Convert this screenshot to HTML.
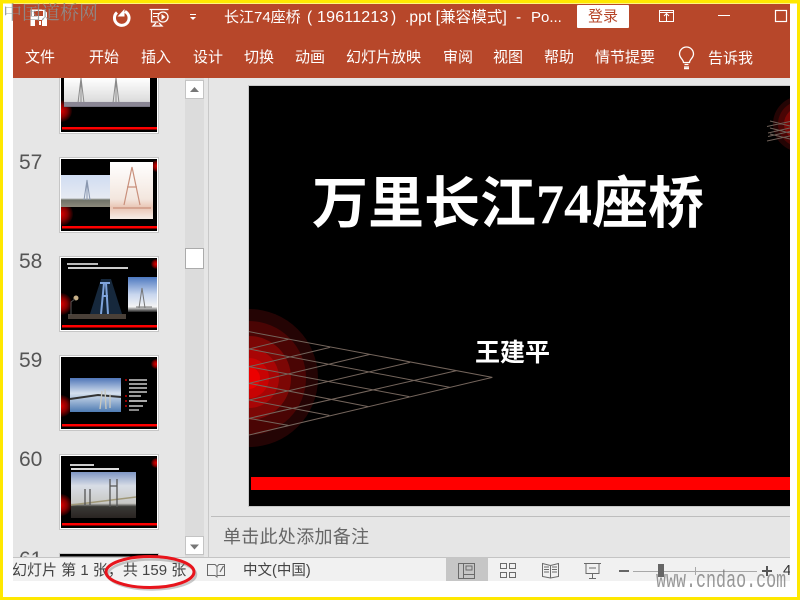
<!DOCTYPE html>
<html><head><meta charset="utf-8"><style>
html,body{margin:0;padding:0;width:800px;height:600px;overflow:hidden;background:#fff}
.t{position:absolute;white-space:nowrap;font-family:"Liberation Sans","Noto Sans CJK SC",sans-serif;line-height:20px}
.tab{color:#fff;font-size:15px;top:48px}
.h{color:#fff;font-size:15.5px;top:8px}
</style></head><body>
<div style="position:absolute;left:13px;top:4px;width:777px;height:74px;background:#B7472A"></div>
<div style="position:absolute;left:13px;top:78px;width:777px;height:479px;background:#E6E6E6"></div>
<div style="position:absolute;left:13px;top:557px;width:777px;height:24px;background:#F1F1F1;border-top:1px solid #c4c4c4;box-sizing:border-box"></div>

<svg style="position:absolute;left:0;top:0" width="800" height="600" viewBox="0 0 800 600">
<defs>
<radialGradient id="g"><stop offset="0" stop-color="#d00"/><stop offset=".55" stop-color="#800"/><stop offset="1" stop-color="#100"/></radialGradient>
<linearGradient id="sky" x1="0" y1="0" x2="0" y2="1"><stop offset="0" stop-color="#4f76b8"/><stop offset=".45" stop-color="#d5e0ee"/><stop offset="1" stop-color="#4e7bb2"/></linearGradient>
<linearGradient id="sky2" x1="0" y1="0" x2="0" y2="1"><stop offset="0" stop-color="#cfdcf2"/><stop offset=".72" stop-color="#e6eaf2"/><stop offset=".78" stop-color="#6f7268"/><stop offset="1" stop-color="#8d8a7c"/></linearGradient>
<linearGradient id="sky3" x1="0" y1="0" x2="0" y2="1"><stop offset="0" stop-color="#7f96c4"/><stop offset=".3" stop-color="#d8dde6"/><stop offset=".68" stop-color="#c8c8c4"/><stop offset=".75" stop-color="#3a3a36"/><stop offset="1" stop-color="#2a2422"/></linearGradient>
<linearGradient id="sky4" x1="0" y1="0" x2="0" y2="1"><stop offset="0" stop-color="#4d78c0"/><stop offset=".5" stop-color="#c8d6ee"/><stop offset=".85" stop-color="#f4f4f4"/><stop offset="1" stop-color="#222"/></linearGradient>
<linearGradient id="wh" x1="0" y1="0" x2="0" y2="1"><stop offset="0" stop-color="#fff"/><stop offset=".65" stop-color="#f3e6de"/><stop offset=".8" stop-color="#e9c5b4"/><stop offset="1" stop-color="#f6eee8"/></linearGradient>
<linearGradient id="gr" x1="0" y1="0" x2="0" y2="1"><stop offset="0" stop-color="#fff"/><stop offset=".8" stop-color="#dcdcdc"/><stop offset="1" stop-color="#6c6a78"/></linearGradient>
<clipPath id="sc"><rect x="249" y="86" width="541" height="420"/></clipPath>
</defs>

<!-- yellow frame -->
<rect x="0" y="0" width="800" height="3.5" fill="#FFE800"/>
<rect x="0" y="0" width="3" height="600" fill="#FFE800"/>
<rect x="797" y="0" width="3" height="600" fill="#FFE800"/>
<rect x="0" y="597" width="800" height="3" fill="#FFE800"/>

<!-- thumbnail 56 -->
<rect x="59" y="78" width="100" height="56" fill="#c6c6c6"/>
<rect x="60" y="78" width="98" height="55" fill="#fff"/>
<svg x="61" y="78" width="96" height="54" viewBox="61 78 96 54">
<rect x="61" y="78" width="96" height="54" fill="#000"/>
<circle cx="61" cy="111" r="11" fill="url(#g)"/>
<rect x="64" y="78" width="86" height="29" fill="url(#gr)"/>
<path d="M81 78v26M78 103l3-25 3 25M116 78v26M113 103l3-25 3 25" stroke="#8a8a8a" fill="none"/>
<rect x="64" y="102" width="86" height="4" fill="#8a8694"/>
<rect x="62" y="127" width="95" height="2.500" fill="#f00"/>
</svg>

<!-- thumbnail 57 -->
<rect x="59.5" y="157.500" width="99" height="75" fill="#fff" stroke="#c6c6c6"/>
<svg x="61" y="159" width="96" height="72" viewBox="61 159 96 72">
<rect x="61" y="159" width="96" height="72" fill="#000"/>
<circle cx="61" cy="214" r="12" fill="url(#g)"/><circle cx="157" cy="166" r="6" fill="url(#g)"/>
<rect x="61" y="175" width="49" height="32" fill="url(#sky2)"/>
<path d="M87 180v20M84 200l3-20 3 20" stroke="#8a98b0" fill="none"/>
<rect x="110" y="162" width="43" height="57" fill="url(#wh)"/>
<path d="M124 205l8-38 8 38M127 187h10M113 208h38" stroke="#c9907c" fill="none" stroke-width="1.200"/>
<rect x="62" y="226" width="95" height="2.500" fill="#f00"/>
</svg>

<!-- thumbnail 58 -->
<rect x="59.5" y="256.500" width="99" height="75" fill="#fff" stroke="#c6c6c6"/>
<svg x="61" y="258" width="96" height="72" viewBox="61 258 96 72">
<rect x="61" y="258" width="96" height="72" fill="#000"/>
<circle cx="61" cy="304" r="11" fill="url(#g)"/><circle cx="156" cy="264" r="5" fill="url(#g)"/>
<rect x="67" y="263" width="31" height="2" fill="#bbb"/><rect x="68" y="267" width="60" height="2" fill="#ccc"/>
<path d="M90 314l11-35 10 0 11 35z" fill="#16283c"/>
<path d="M101 314l3-31M108 314l-2-31M100 283h10M102 296h6" stroke="#7fa4dc" stroke-width="2" fill="none"/>
<rect x="68" y="314" width="58" height="5" fill="#4a4038"/>
<circle cx="76" cy="298" r="2.500" fill="#c8b088"/><path d="M71 315v-13l4-3" stroke="#555" fill="none"/>
<rect x="128" y="277" width="29" height="35" fill="url(#sky4)"/>
<path d="M139 308l3-20 3 20M136 307h16" stroke="#777" fill="none"/>
<rect x="62" y="325" width="95" height="2.500" fill="#f00"/>
</svg>

<!-- thumbnail 59 -->
<rect x="59.5" y="355.500" width="99" height="75" fill="#fff" stroke="#c6c6c6"/>
<svg x="61" y="357" width="96" height="72" viewBox="61 357 96 72">
<rect x="61" y="357" width="96" height="72" fill="#000"/>
<circle cx="61" cy="406" r="11" fill="url(#g)"/><circle cx="156" cy="364" r="5" fill="url(#g)"/>
<rect x="70" y="378" width="51" height="34" fill="url(#sky)"/>
<path d="M70 399l28-4 23 2" stroke="#333" stroke-width="2" fill="none"/>
<path d="M100 409l2-18M106 409l-1-20M110 408v-14" stroke="#c8c8c0" stroke-width="1.300"/>
<rect x="129" y="379" width="18" height="2" fill="#999"/><rect x="129" y="383" width="18" height="2" fill="#999"/><rect x="129" y="387" width="18" height="2" fill="#999"/><rect x="129" y="391" width="18" height="2" fill="#999"/>
<rect x="129" y="395" width="12" height="2" fill="#999"/><rect x="129" y="400" width="18" height="2" fill="#aaa"/><rect x="129" y="405" width="14" height="2" fill="#999"/><rect x="129" y="409" width="10" height="2" fill="#888"/>
<rect x="125" y="379" width="2" height="2" fill="#900"/><rect x="125" y="395" width="2" height="2" fill="#900"/><rect x="125" y="400" width="2" height="2" fill="#900"/><rect x="125" y="405" width="2" height="2" fill="#900"/>
<rect x="62" y="424" width="95" height="2.500" fill="#f00"/>
</svg>

<!-- thumbnail 60 -->
<rect x="59.5" y="454.500" width="99" height="75" fill="#fff" stroke="#c6c6c6"/>
<svg x="61" y="456" width="96" height="72" viewBox="61 456 96 72">
<rect x="61" y="456" width="96" height="72" fill="#000"/>
<circle cx="61" cy="505" r="11" fill="url(#g)"/><circle cx="156" cy="463" r="5" fill="url(#g)"/>
<rect x="70" y="464" width="24" height="2" fill="#ccc"/><rect x="71" y="468" width="48" height="2" fill="#ddd"/>
<rect x="71" y="472" width="65" height="46" fill="url(#sky3)"/>
<path d="M71 505l65-8" stroke="#a09878" stroke-width="1.500"/>
<path d="M110 507v-28M117 507v-28M110 486h7M85 505v-16M90 505v-16" stroke="#555" stroke-width="1.300" fill="none"/>
<rect x="62" y="523" width="95" height="2.500" fill="#f00"/>
</svg>

<!-- thumbnail 61 -->
<rect x="59.5" y="553.500" width="99" height="3.500" fill="#000" stroke="#c6c6c6"/>

<!-- scrollbar -->
<rect x="185" y="78" width="19" height="479" fill="#DCDCDC"/>
<rect x="185.500" y="80.500" width="18" height="18" fill="#fff" stroke="#c4c4c4"/>
<path d="M190 92l4.500-5 4.500 5z" fill="#777"/>
<rect x="185.500" y="248.500" width="18" height="20" fill="#fff" stroke="#ababab"/>
<rect x="185.500" y="536.500" width="18" height="18" fill="#fff" stroke="#c4c4c4"/>
<path d="M190 544.500h9l-4.500 5z" fill="#777"/>
<rect x="208" y="78" width="1" height="479" fill="#c8c8c8"/>
<rect x="211" y="516" width="579" height="1" fill="#bdbdbd"/>

<!-- slide -->
<rect x="248" y="85" width="542" height="422" fill="#c8c8c8"/>
<rect x="249" y="86" width="541" height="420" fill="#000"/>
<g clip-path="url(#sc)">
<circle cx="249" cy="378" r="69" fill="#240404"/><circle cx="249" cy="378" r="57" fill="#4a0504"/><circle cx="249" cy="378" r="42" fill="#7c0705"/>
<circle cx="249" cy="378" r="30" fill="#a80505"/><circle cx="249" cy="378" r="20" fill="#c80303"/><circle cx="249" cy="378" r="11" fill="#ec0000"/>
<circle cx="801" cy="124" r="28" fill="#240404"/><circle cx="801" cy="124" r="23" fill="#4a0504"/><circle cx="801" cy="124" r="17" fill="#7c0705"/><circle cx="801" cy="124" r="11" fill="#a80505"/>
<g transform="translate(240,300) scale(.33333)" stroke="#74655c" stroke-width="3" fill="none">
<path d="M27 95L757 232L27 405M27 147L630 262M27 200L508 290M27 250L385 320M27 300L268 346M27 355L145 376M27 355L650 212M27 300L510 187M27 250L390 163M27 200L270 142M27 147L145 118"/>
</g>
<path d="M767 126.500l23-5M768 133l22-5M768 136.500l22-5M767 141l23-5M770 121l20 5M770 128l20 5M770 134l20 5" stroke="#6f6058" fill="none"/>
<rect x="251" y="477" width="539" height="13" fill="#f00"/>
</g>

<!-- title bar icons -->
<g fill="none" stroke="#fff">
<path d="M30.500 9.500h13.500l3 3v13.500h-16.500z" fill="#fff" stroke="none"/>
<rect x="34" y="11" width="9" height="5" fill="#B7472A" stroke="none"/>
<rect x="35" y="20" width="7" height="6" fill="#B7472A" stroke="none"/>
<rect x="39" y="21" width="2" height="4" fill="#fff" stroke="none"/>
<path d="M117 12.500a7.300 7.300 0 1 0 8-1" stroke-width="3"/>
<path d="M124.500 9v7.500h-7z" fill="#fff" stroke="none"/>
<path d="M149.500 9.500h19M151.500 10v12h7M156 23l-3 3h9l-3-3" stroke-width="1.300"/>
<circle cx="163" cy="17" r="5" stroke-width="1.300"/><path d="M161.500 14v6l4-3z" fill="#fff" stroke="none"/>
<path d="M153 13.500h6M153 16.500h4" stroke-width="1"/>
<path d="M190 14.500h6" stroke-width="1"/><path d="M190 17h6l-3 3z" fill="#fff" stroke="none"/>
<rect x="659.500" y="10.500" width="14" height="11"/><path d="M660 12.500h13M666.500 21v-7M664 16l2.500-2.500 2.500 2.500"/>
<path d="M718 15.500h12"/>
<rect x="775.500" y="10.500" width="11" height="11" stroke-width="1.200"/>
<path d="M684 67h5M684.500 64.500h4M683.500 62.500c0-3-4-4.500-4-8.500a7 7 0 0 1 14 0c0 4-4 5.500-4 8.500z" stroke-width="1.300"/>
<path d="M684 68.500h5" stroke-width="1.500"/>
</g>
<rect x="577" y="5" width="52" height="23" rx="1" fill="#fff"/>

<!-- status icons -->
<rect x="446" y="557.500" width="42" height="23.500" fill="#C6C6C6"/>
<g fill="none" stroke="#6a6a6a" stroke-width="1">
<path d="M207.500 564.500h7.500l2 2v10.500l-2-1.500h-7.500zM217 566.500l2-2h5.500v11h-7.500"/><path d="M223.500 566l-3.500 6" stroke-width="1.200"/>
<rect x="458.500" y="563.500" width="16" height="15"/><path d="M463.500 564v14.500M463.500 574.500h11"/><rect x="466" y="566" width="6" height="4"/>
<rect x="500.500" y="563.500" width="6" height="5"/><rect x="509.500" y="563.500" width="6" height="5"/><rect x="500.500" y="572.500" width="6" height="5"/><rect x="509.500" y="572.500" width="6" height="5"/>
<path d="M550.500 565.500l-8-2v13l8 1.500 8-1.500v-13zM550.500 565.500v13M544 567h5M544 569.500h5M544 572h5M552 567h5M552 569.500h5M552 572h5"/>
<path d="M584 563.500h17M586 564v9.500h13v-9.500M592.500 574v4M589 578.500h7M589 568h7"/>
</g>
<rect x="619" y="570" width="10" height="2" fill="#666"/>
<rect x="633" y="571" width="124" height="1" fill="#a8a8a8"/>
<rect x="695" y="567" width="1" height="8" fill="#a8a8a8"/>
<rect x="658" y="564" width="6" height="13" fill="#666"/>
<path d="M762 571h10M767 566v10" stroke="#555" stroke-width="2"/>
</svg>

<!-- title bar text -->
<div class="t h" style="left:224px;font-size:15px">长江74座桥</div>
<div class="t h" style="left:307px">(</div>
<div class="t h" style="left:317px;font-size:16px;letter-spacing:.2px">19611213</div>
<div class="t h" style="left:391px">)</div>
<div class="t h" style="left:405px;font-size:15.500px;letter-spacing:.1px">.ppt [兼容模式]</div>
<div class="t h" style="left:516px">-</div>
<div class="t h" style="left:531px;font-size:15px">Po...</div>
<div class="t" style="left:588px;top:7px;color:#B7472A;font-size:15px">登录</div>
<div class="t tab" style="left:25px">文件</div>
<div class="t tab" style="left:89px">开始</div>
<div class="t tab" style="left:141px">插入</div>
<div class="t tab" style="left:193px">设计</div>
<div class="t tab" style="left:244px">切换</div>
<div class="t tab" style="left:295px">动画</div>
<div class="t tab" style="left:346px">幻灯片放映</div>
<div class="t tab" style="left:443px">审阅</div>
<div class="t tab" style="left:493px">视图</div>
<div class="t tab" style="left:544px">帮助</div>
<div class="t tab" style="left:595px">情节提要</div>
<div class="t tab" style="left:708px;top:49px">告诉我</div>

<!-- slide numbers -->
<div class="t" style="left:19px;top:153px;font-size:21px;color:#555">57</div>
<div class="t" style="left:19px;top:252px;font-size:21px;color:#555">58</div>
<div class="t" style="left:19px;top:351px;font-size:21px;color:#555">59</div>
<div class="t" style="left:19px;top:450px;font-size:21px;color:#555">60</div>
<div style="position:absolute;left:13px;top:540px;width:60px;height:17px;overflow:hidden"><div class="t" style="left:6px;top:10px;font-size:21px;color:#555">61</div></div>

<!-- slide text -->
<div class="t" style="left:312px;top:173px;line-height:64px;font-size:56px;font-weight:700;color:#fff;font-family:'Liberation Serif','Noto Sans CJK SC',sans-serif">万里长江74座桥</div>
<div class="t" style="left:475px;top:336px;line-height:30px;font-size:25px;font-weight:700;color:#fff;font-family:'Noto Sans CJK SC',sans-serif">王建平</div>

<!-- notes -->
<div class="t" style="left:223px;top:527px;font-size:18px;letter-spacing:.3px;color:#666">单击此处添加备注</div>

<!-- status text -->
<div style="position:absolute;left:13px;top:558px;width:190px;height:23px;overflow:hidden">
<div class="t" style="left:-1px;top:3px;font-size:15px;color:#444">幻灯片 第 1 张，共 159 张</div></div>
<div class="t" style="left:243px;top:561px;font-size:14.500px;color:#444">中文(中国)</div>
<div style="position:absolute;left:780px;top:558px;width:10px;height:23px;overflow:hidden"><div class="t" style="left:3px;top:3px;font-size:15px;color:#333">4</div></div>

<!-- red ellipse annotation (over text) -->
<svg style="position:absolute;left:0;top:0" width="800" height="600" viewBox="0 0 800 600">
<ellipse cx="152" cy="574.500" rx="44" ry="15" fill="none" stroke="#777" stroke-width="2.500" opacity=".4"/>
<ellipse cx="150" cy="572" rx="44" ry="15.500" fill="none" stroke="#E8141C" stroke-width="3"/>
</svg>

<!-- watermarks -->
<div class="t" style="left:3px;top:2px;font-size:19px;color:#8a9294;font-family:'Noto Serif CJK SC',serif;opacity:.85">中国道桥网</div>
<div class="t" style="left:656px;top:570px;font-size:24px;line-height:24px;color:#777;opacity:.75;font-family:'Liberation Mono',monospace;transform:scaleX(.695);transform-origin:0 0">www.cndao.com</div>
</body></html>
